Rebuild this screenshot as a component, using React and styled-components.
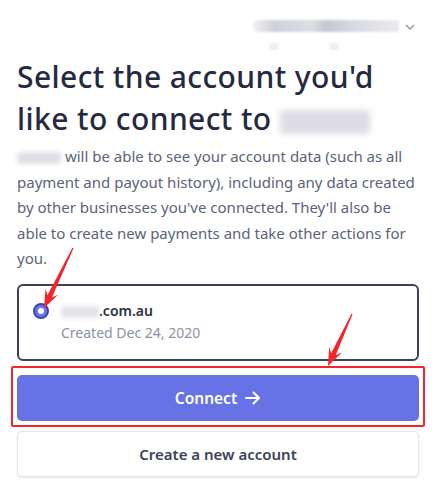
import React from "react";
import styled, { createGlobalStyle } from "styled-components";

const GlobalStyle = createGlobalStyle`
  html, body {
    margin: 0;
    padding: 0;
    background: #fff;
  }
  body {
    font-family: "Noto Sans", "Open Sans", sans-serif;
    -webkit-font-smoothing: antialiased;
  }
`;

const Page = styled.div`
  position: relative;
  width: 437px;
  height: 494px;
  padding: 20px 18px 0 17px;
  box-sizing: border-box;
  overflow: hidden;
`;

const TopBar = styled.div`
  display: flex;
  justify-content: flex-end;
  align-items: flex-start;
  gap: 6px;
  height: 22px;
  padding-right: 4px;
`;

const Blur = styled.span`
  display: inline-block;
  width: ${p => p.w}px;
  height: ${p => p.h}px;
  border-radius: 3px;
  background: ${p => p.bg || "#d9dbe2"};
  filter: blur(${p => p.blur || 2}px);
  vertical-align: middle;
`;

const AccountPicker = styled.div`
  display: flex;
  flex-direction: column;
  gap: 2px;
  span:last-child {
    margin-left: 16px;
  }
`;

const ChevronWrap = styled.span`
  display: flex;
  padding-top: 4px;
`;

const Heading = styled.h1`
  margin: 14px 0 0;
  font-size: 30px;
  line-height: 42px;
  font-weight: 500;
  color: #252a40;
  letter-spacing: 0.4px;
`;

const Text = styled.p`
  margin: 4px 0 0;
  font-size: 15px;
  line-height: 25.5px;
  color: #5b637a;
`;

const Card = styled.label`
  display: flex;
  align-items: flex-start;
  gap: 12px;
  margin-top: 12px;
  padding: 14px 16px 15px 14px;
  border: 2px solid #3c4257;
  border-radius: 6px;
`;

const Radio = styled.span`
  position: relative;
  margin-top: 3px;
  width: 16px;
  height: 16px;
  box-sizing: border-box;
  border-radius: 50%;
  border: 2px solid #3d44a6;
  background: #6c76e8;
  &::after {
    content: "";
    position: absolute;
    left: 50%;
    top: 50%;
    width: 6px;
    height: 6px;
    margin: -3px 0 0 -3px;
    border-radius: 50%;
    background: #fff;
  }
`;

const AccountInfo = styled.div`
  display: flex;
  flex-direction: column;
`;

const AccountName = styled.div`
  font-size: 14px;
  line-height: 22px;
  font-weight: 600;
  color: #30313d;
`;

const Created = styled.div`
  font-size: 14px;
  line-height: 22px;
  color: #8a92a6;
`;

const Highlight = styled.div`
  margin: 5px -6px 0 -6px;
  padding: 7px 4px 4px;
  border: 2px solid #f5232a;
  border-radius: 2px;
`;

const Button = styled.button`
  display: flex;
  justify-content: center;
  align-items: center;
  gap: 8px;
  width: 100%;
  height: 46px;
  border-radius: 5px;
  font-family: inherit;
  font-size: 15.5px;
  font-weight: 600;
  cursor: pointer;
  border: ${p => (p.primary ? "none" : "1px solid #e3e5ea")};
  background: ${p => (p.primary ? "#6773e4" : "#fff")};
  color: ${p => (p.primary ? "#fff" : "#3c4257")};
  box-shadow: ${p => (p.primary ? "none" : "0 1px 2px rgba(60,66,87,0.12)")};
`;

const Secondary = styled(Button)`
  margin-top: 4px;
  font-size: 15px;
`;

const Overlay = styled.svg`
  position: absolute;
  left: 0;
  top: 0;
  pointer-events: none;
`;

function arrowPoints(x1, y1, x2, y2) {
  const dx = x2 - x1;
  const dy = y2 - y1;
  const len = Math.hypot(dx, dy);
  const ux = dx / len;
  const uy = dy / len;
  const nx = -uy;
  const ny = ux;
  const headLen = 18;
  const headW = 7;
  const neckW = 2.5;
  const bx = x2 - ux * headLen;
  const by = y2 - uy * headLen;
  const nbx = x2 - ux * (headLen - 5);
  const nby = y2 - uy * (headLen - 5);
  const pts = [
    [x1 + nx * 0.6, y1 + ny * 0.6],
    [nbx + nx * neckW, nby + ny * neckW],
    [bx + nx * headW, by + ny * headW],
    [x2, y2],
    [bx - nx * headW, by - ny * headW],
    [nbx - nx * neckW, nby - ny * neckW],
    [x1 - nx * 0.6, y1 - ny * 0.6]
  ];
  return pts.map(p => p.join(",")).join(" ");
}

const Chevron = () => (
  <svg width="10" height="6" viewBox="0 0 10 6">
    <path d="M1 1l4 4 4-4" fill="none" stroke="#8792a2" strokeWidth="1.3" />
  </svg>
);

const Arrow = () => (
  <svg width="16" height="14" viewBox="0 0 16 14">
    <path
      d="M1 7h13M8.5 1.5L14 7l-5.5 5.5"
      fill="none"
      stroke="#fff"
      strokeWidth="2"
      strokeLinecap="round"
      strokeLinejoin="round"
    />
  </svg>
);

export default function App() {
  return (
    <>
      <GlobalStyle />
      <Page>
        <TopBar>
          <AccountPicker>
            <Blur w={146} h={12} bg="linear-gradient(90deg,#f6f0f2,#cfd1d9 15%,#dcdee4 40%,#c6c8d0 50%,#d9dbe2 70%,#e8e9ee 95%)" blur={1} />
            <span>
              <Blur w={10} h={7} bg="#eceef1" blur={1} />
              <Blur w={10} h={7} bg="#eceef1" blur={1} style={{ marginLeft: 50 }} />
            </span>
          </AccountPicker>
          <ChevronWrap>
            <Chevron />
          </ChevronWrap>
        </TopBar>
        <Heading>
          Select the account you'd like to connect to{" "}
          <Blur w={90} h={24} bg="#dcdde2" blur={3} />
        </Heading>
        <Text>
          <Blur w={44} h={12} bg="#dfe0e5" blur={2} /> will be able to see your account data
          (such as all payment and payout history), including any data created by other
          businesses you've connected. They'll also be able to create new payments and take
          other actions for you.
        </Text>
        <Card>
          <Radio />
          <AccountInfo>
            <AccountName>
              <Blur w={38} h={12} bg="#e2e3e7" blur={2} />
              .com.au
            </AccountName>
            <Created>Created Dec 24, 2020</Created>
          </AccountInfo>
        </Card>
        <Highlight>
          <Button primary>
            Connect <Arrow />
          </Button>
        </Highlight>
        <Secondary>Create a new account</Secondary>
        <Overlay width="437" height="494">
          <polygon points={arrowPoints(73, 248, 44, 308)} fill="#f5232a" />
          <polygon points={arrowPoints(352, 314, 328, 366)} fill="#f5232a" />
        </Overlay>
      </Page>
    </>
  );
}
